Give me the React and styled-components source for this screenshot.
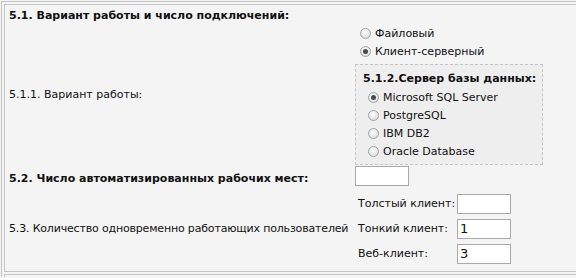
import React from 'react';
import styled, { createGlobalStyle } from 'styled-components';

const GlobalStyle = createGlobalStyle`
  html, body {
    margin: 0;
    padding: 0;
    background: #f4f4f4;
  }
  body {
    font-family: "DejaVu Sans", Verdana, sans-serif;
    font-size: 11px;
    color: #111;
  }
`;

const Frame = styled.div`
  margin: 1px 0 0 1px;
  border-top: 1px solid #c4c4c4;
  border-left: 1px solid #c4c4c4;
  padding: 2px 0 0 2px;
  display: flex;
  flex-direction: column;
  gap: 2px;
  overflow: hidden;
  height: 276px;
  box-sizing: border-box;
`;

const Cell = styled.div`
  border: 1px solid #c4c4c4;
  border-right: none;
  display: grid;
  grid-template-columns: 350px 1fr;
  flex-shrink: 0;
`;

const NextCell = styled.div`
  border: 1px solid #c4c4c4;
  border-right: none;
  height: 30px;
  flex-shrink: 0;
`;

const Heading = styled.div`
  grid-column: ${p => (p.$wide ? '1 / 3' : 'auto')};
  font-weight: bold;
  line-height: 14px;
  padding: ${p => p.$pad || '4px 4px 0'};
  align-self: ${p => p.$align || 'start'};
  white-space: nowrap;
`;

const Label = styled.div`
  line-height: 14px;
  padding: 0 0 0 4px;
  align-self: center;
  white-space: nowrap;
  letter-spacing: ${p => p.$tight ? '-0.17px' : '0'};
`;

const Side = styled.div`
  padding: ${p => p.$pad || '0'};
  display: flex;
  flex-direction: column;
  align-items: flex-start;
`;

const RadioRow = styled.label`
  display: flex;
  align-items: center;
  height: 18px;
  padding-left: ${p => p.$indent || 5}px;
  gap: 4px;
  white-space: nowrap;
`;

const Dot = styled.span`
  width: 11px;
  height: 11px;
  box-sizing: border-box;
  border-radius: 50%;
  border: 1px solid #a2a2a2;
  background: radial-gradient(circle at 45% 35%, #fdfdfd 0%, #e6e6e6 60%, #d4d4d4 100%);
  display: flex;
  align-items: center;
  justify-content: center;
  flex-shrink: 0;

  &::after {
    content: '';
    width: 5px;
    height: 5px;
    border-radius: 50%;
    background: ${p => (p.$on ? '#4a4a4a' : 'transparent')};
  }
`;

const Box = styled.div`
  margin-top: 4px;
  width: 188px;
  box-sizing: border-box;
  border: 1px dashed #c6c6c6;
  background: #eeeeee;
  padding: 7px 0 4px 3px;
`;

const BoxTitle = styled.div`
  font-weight: bold;
  line-height: 14px;
  padding-left: 4px;
  margin-bottom: 2px;
`;

const Field = styled.input`
  width: ${p => p.$w || 54}px;
  height: 20px;
  box-sizing: border-box;
  border: 1px solid #a9a9a9;
  background: #fff;
  padding: 0 2px;
  margin: 0;
  font-family: "DejaVu Sans", Verdana, sans-serif;
  font-size: 13px;
  color: #111;
  outline: none;
`;

const Counts = styled.div`
  display: grid;
  grid-template-columns: 99px 54px;
  grid-auto-rows: 25px;
  align-items: center;
  padding: 5px 0 5px 3px;
`;

const CountLabel = styled.span`
  line-height: 14px;
  white-space: nowrap;
`;

function Radio({ on, indent, children }) {
  return (
    <RadioRow $indent={indent}>
      <Dot $on={on} />
      {children}
    </RadioRow>
  );
}

export default function App() {
  return (
    <>
      <GlobalStyle />
      <Frame>
        <Cell>
          <Heading $wide>5.1. Вариант работы и число подключений:</Heading>

          <Label>5.1.1. Вариант работы:</Label>
          <Side $pad="1px 0 1px 0">
            <Radio indent={5}>Файловый</Radio>
            <Radio indent={5} on>Клиент-серверный</Radio>
            <Box>
              <BoxTitle>5.1.2.Сервер базы данных:</BoxTitle>
              <Radio indent={9} on>Microsoft SQL Server</Radio>
              <Radio indent={9}>PostgreSQL</Radio>
              <Radio indent={9}>IBM DB2</Radio>
              <Radio indent={9}>Oracle Database</Radio>
            </Box>
          </Side>

          <Heading $pad="6px 4px 0" $align="center">
            5.2. Число автоматизированных рабочих мест:
          </Heading>
          <Side>
            <Field />
          </Side>

          <Label $tight>5.3. Количество одновременно работающих пользователей</Label>
          <Counts>
            <CountLabel>Толстый клиент:</CountLabel>
            <Field defaultValue="" />
            <CountLabel>Тонкий клиент:</CountLabel>
            <Field defaultValue="1" />
            <CountLabel>Веб-клиент:</CountLabel>
            <Field defaultValue="3" />
          </Counts>
        </Cell>
        <NextCell />
      </Frame>
    </>
  );
}
